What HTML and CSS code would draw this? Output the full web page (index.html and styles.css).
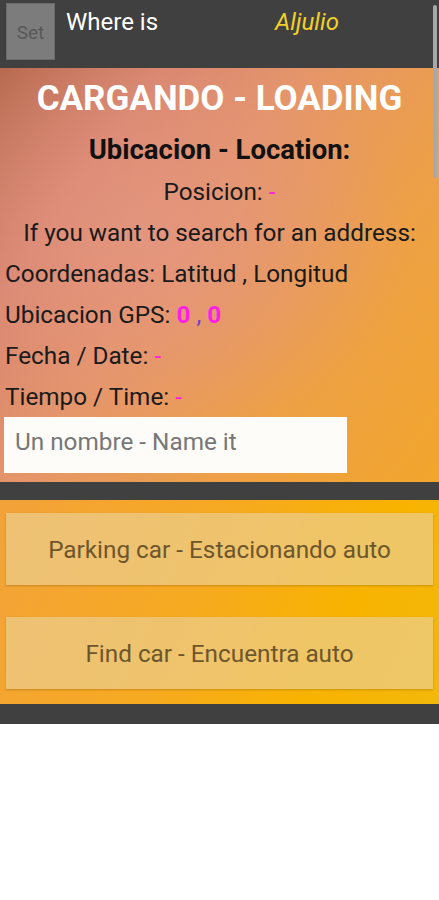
FILE: index.html
```html
<!DOCTYPE html>
<html>
<head>
<meta charset="utf-8">
<link rel="stylesheet" href="styles.css">
</head>
<body>
<div class="app">
  <div class="topbar">
    <div class="set-btn">Set</div>
    <div class="where">Where is</div>
    <div class="name">Aljulio</div>
  </div>
  <div class="main">
    <div class="title">CARGANDO - LOADING</div>
    <div class="subtitle">Ubicacion - Location:</div>
    <div class="line center">Posicion: <span class="mag">-</span></div>
    <div class="line center">If you want to search for an address:</div>
    <div class="line">Coordenadas: Latitud , Longitud</div>
    <div class="line">Ubicacion GPS: <span class="mag bold">0</span> <span class="comma">,</span> <span class="mag bold">0</span></div>
    <div class="line">Fecha / Date: <span class="mag">-</span></div>
    <div class="line">Tiempo / Time: <span class="mag">-</span></div>
    <div class="input">Un nombre - Name it</div>
  </div>
  <div class="sep"></div>
  <div class="actions">
    <div class="btn">Parking car - Estacionando auto</div>
    <div class="btn">Find car - Encuentra auto</div>
  </div>
  <div class="sep sep2"></div>
  <div class="scrollbar"></div>
</div>
</body>
</html>
```
FILE: styles.css
```css
* { box-sizing: border-box; }
html, body { margin: 0; padding: 0; background: #ffffff; }
body { font-family: Roboto, "Liberation Sans", sans-serif; }
.app { position: relative; width: 439px; }
.topbar {
  height: 68px;
  background: #404040;
  display: flex;
  align-items: flex-start;
}
.set-btn {
  margin: 3px 0 0 6px;
  width: 49px;
  height: 57px;
  background: #7c7c7c;
  border: 1px solid #6a6a6a;
  color: #585858;
  font-size: 19px;
  display: flex;
  align-items: center;
  justify-content: center;
  padding-top: 2px;
}
.where {
  color: #ffffff;
  font-size: 24px;
  line-height: 44px;
  margin-left: 11px;
}
.name {
  color: #f2d02a;
  font-size: 24px;
  font-style: italic;
  line-height: 44px;
  margin-left: 117px;
}
.main {
  height: 414px;
  padding-top: 10px;
  background:
    radial-gradient(ellipse 260px 200px at 150px 170px, rgba(228,150,130,0.8), rgba(228,150,130,0) 100%),
    linear-gradient(125deg, #b86a50 0%, #d88670 22%, #e5956a 42%, #eda048 68%, #f2a62c 100%);
}
.title {
  color: #ffffff;
  font-weight: bold;
  font-size: 35px;
  line-height: 42px;
  text-align: center;
}
.subtitle {
  color: #111111;
  font-weight: bold;
  font-size: 27.5px;
  line-height: 40px;
  text-align: center;
  margin-top: 10px;
  margin-bottom: 1px;
}
.line {
  color: #1a1a1a;
  font-size: 24.3px;
  line-height: 41px;
  padding-left: 5px;
  white-space: nowrap;
}
.line.center { text-align: center; padding-left: 0; }
.mag { color: #ff1ee6; }
.bold { font-weight: bold; }
.comma { color: #7a3ad0; }
.input {
  margin-left: 4px;
  width: 343px;
  height: 56px;
  background: #fdfcf8;
  color: #777777;
  font-size: 24.3px;
  line-height: 50px;
  padding-left: 11px;
}
.sep { height: 18px; background: #404040; }
.sep2 { height: 20px; }
.actions {
  height: 204px;
  padding: 13px 6px 0 6px;
  display: flex;
  flex-direction: column;
  gap: 32px;
  background: linear-gradient(115deg, #f2a23a 0%, #f6aa20 45%, #f8b300 75%, #f2b80a 100%);
}
.btn {
  height: 72px;
  background: rgba(236, 205, 140, 0.72);
  box-shadow: 0 1px 2px rgba(120, 80, 0, 0.35);
  color: #6e562c;
  font-size: 24.3px;
  display: flex;
  align-items: center;
  justify-content: center;
  white-space: nowrap;
}
.scrollbar {
  position: absolute;
  left: 433px;
  top: 5px;
  width: 4px;
  height: 173px;
  background: #a8a8a8;
  border-radius: 2px;
}
```
